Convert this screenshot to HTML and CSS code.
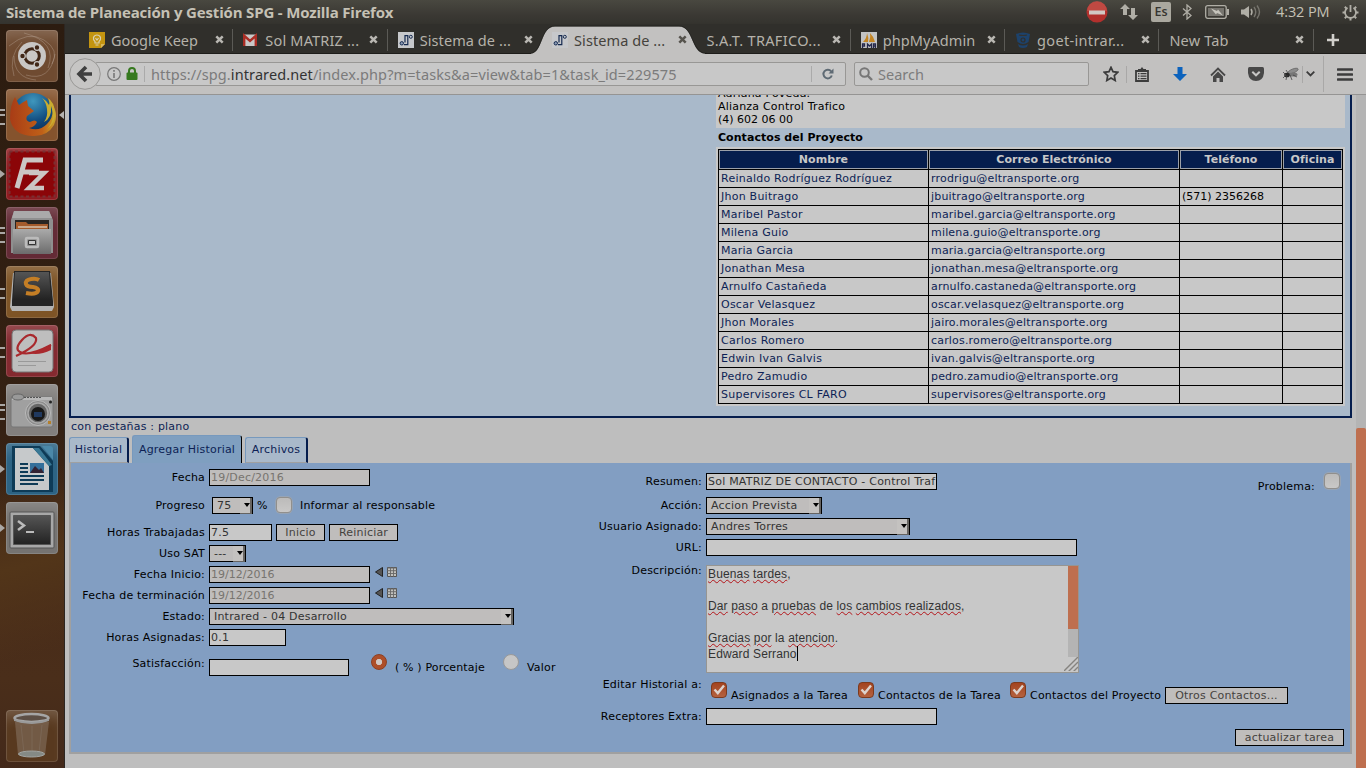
FILE: index.html
```html
<!DOCTYPE html>
<html lang="es">
<head>
<meta charset="utf-8">
<title>Sistema de Planeación y Gestión SPG</title>
<link rel="stylesheet" href="styles.css">
</head>
<body>
<svg width="0" height="0" class="defs">
  <defs>
    <linearGradient id="metal" x1="0" y1="0" x2="0" y2="1"><stop offset="0" stop-color="#aaa"/><stop offset="1" stop-color="#6c6c6c"/></linearGradient>
    <linearGradient id="dark" x1="0" y1="0" x2="0" y2="1"><stop offset="0" stop-color="#555"/><stop offset="1" stop-color="#222"/></linearGradient>
    <radialGradient id="globe" cx=".5" cy=".2" r=".8"><stop offset="0" stop-color="#3f97bd"/><stop offset=".6" stop-color="#124d80"/><stop offset="1" stop-color="#0c2c55"/></radialGradient>
    <linearGradient id="fox" x1="0" y1="0" x2="1" y2="0"><stop offset="0" stop-color="#a83c16"/><stop offset=".7" stop-color="#c06018"/><stop offset="1" stop-color="#c9a52c"/></linearGradient>
    <symbol id="close" viewBox="0 0 9 9"><path d="M1.3 1.3l6.4 6.4M7.7 1.3L1.3 7.7" stroke="currentColor" stroke-width="2.5"/></symbol>
    <symbol id="spg" viewBox="0 0 16 16"><path fill="#c6c8cb" d="M0 0h16v16H0z"/><path d="M7 10.500V3.600h2.800v9H6" fill="none" stroke="#152a50" stroke-width="1.200"/><circle cx="3.800" cy="11.300" r="1.700" fill="#8b9bb5" stroke="#152a50"/><circle cx="12.800" cy="4.800" r="1.500" fill="none" stroke="#152a50"/></symbol>
    <symbol id="cal" viewBox="0 0 10 10"><path fill="#c0c0bc" stroke="#555" d="M.5.5h9v9h-9z"/><path fill="none" stroke="#666" stroke-width=".9" d="M0 1h10M0 3.7h10M0 6.5h10M3.5 0v10M6.5 0v10"/></symbol>
    <symbol id="back" viewBox="0 0 8 10"><path d="M7.5.5v9L.5 5z" fill="#555" stroke="#222"/></symbol>
    <symbol id="check" viewBox="0 0 16 16"><path d="M3.5 7.5l3.3 3.6L13 3.5" fill="none" stroke="#ddd3cd" stroke-width="2.4"/></symbol>
  </defs>
</svg>

<header class="panel">
  <h1>Sistema de Planeación y Gestión SPG - Mozilla Firefox</h1>
  <div class="tray">
    <svg class="t-stop" width="22" height="22" viewBox="0 0 22 22"><circle cx="11" cy="11" r="10.5" fill="#b2302d"/><path d="M1 10a10 10 0 0 1 20 0z" fill="#c85a50" opacity=".6"/><path fill="#d2c8c4" d="M3 9.5h16v4H3z"/></svg>
    <svg class="t-net" width="18" height="16" viewBox="0 0 18 16"><path fill="#b0aea6" d="M5 0l5 5H7v6H3V5H0zM13 16l5-5h-3V4h-4v7H8z"/></svg>
    <span class="t-lang">Es</span>
    <svg class="t-bt" width="10" height="16" viewBox="0 0 10 16"><path d="M1 4.5l8 7L5 15V1l4 3.5-8 7" fill="none" stroke="#b0aea6" stroke-width="1.3"/></svg>
    <svg class="t-bat" width="24" height="14" viewBox="0 0 24 14"><rect x=".7" y=".7" width="20.5" height="12.6" rx="2" fill="none" stroke="#b0aea6" stroke-width="1.3"/><path fill="#77756f" d="M3 3h16v8H3z"/><path fill="#b0aea6" d="M22 4h2v6h-2z"/><path fill="#c6c4bc" d="M6 3.500l6 2.500 1-1.500 5 6-6-2.500-1 1.500z"/></svg>
    <svg class="t-vol" width="20" height="14" viewBox="0 0 20 14"><path fill="#b0aea6" d="M0 4.500h3L8 1v12L3 9.500H0z"/><path d="M10 4q2 3 0 6" fill="none" stroke="#b0aea6" stroke-width="1.500"/><path d="M13 2q3.500 5 0 10M16 .5q5 6.500 0 13" fill="none" stroke="#77756e" stroke-width="1.400"/></svg>
    <span class="t-clock">4:32 PM</span>
    <svg class="t-gear" width="17" height="17" viewBox="0 0 17 17"><path d="M5.500 3.800a5.500 5.500 0 1 0 6 0M8.500 1v7" fill="none" stroke="#b0aea6" stroke-width="1.800"/><path d="M.5 8.500h2.500M14 8.500h2.500M8.500 14v2.500M2.800 2.800l1.800 1.800M14.200 2.800l-1.800 1.800M2.800 14.200l1.800-1.800M14.200 14.200l-1.800-1.800" stroke="#b0aea6" stroke-width="2"/></svg>
  </div>
</header>

<div class="desk">
<aside class="launcher">
  <div class="app dash"><svg viewBox="0 0 52 52"><g fill="none" stroke="#b9a595" stroke-width="1" opacity=".4"><path d="M3 16Q22 0 38 10T46 34M8 46Q2 26 16 12M18 3Q52 12 42 38M49 24Q44 52 20 45M8 26Q8 48 30 50"/></g><circle cx="26" cy="26" r="14" fill="#c9c7c5"/><circle cx="26" cy="26" r="7.300" fill="none" stroke="#402616" stroke-width="3"/><g fill="#402616" stroke="#c9c7c5" stroke-width="1.200"><circle cx="16.500" cy="26" r="2.800"/><circle cx="31" cy="17.500" r="2.800"/><circle cx="31" cy="34.500" r="2.800"/></g></svg></div>
  <div class="app firefox m3 focused"><svg viewBox="0 0 52 52"><circle cx="27" cy="24.500" r="20.500" fill="url(#globe)"/><path d="M9 8l4 8q4-3 8-5l1 6 6 5-7 5q-2 5 3 6 5-3 7 0-2 5-8 6 10 4 18-4 8-8 5-20 7 10 2 21-7 12-22 11Q7 46 4 30q0-14 5-22z" fill="url(#fox)"/><path d="M36 9q4 4 5 11 1 8-3 13 8-4 7-16 5 14-4 23 9-6 8-17-1-10-7-14 2 5 1 7-3-5-7-7z" fill="#c9ad30"/></svg></div>
  <div class="app filezilla m1"><svg viewBox="0 0 52 52"><rect x="3.500" y="3.500" width="45" height="45" fill="#8b0508" stroke="#7a3032" stroke-width="2" stroke-dasharray="3 2.500"/><path fill="none" stroke="#cbc6c4" stroke-width="5" d="M11 40l8-28h18M16 24h17"/><path fill="none" stroke="#cbc6c4" stroke-width="4.500" d="M23 25h15L23 40h15"/></svg></div>
  <div class="app files m3"><svg viewBox="0 0 52 52"><path d="M8 4h35l4 9v33H5V13z" fill="#8f8f8f"/><path d="M8 4h35l3 7H6z" fill="#aaa"/><path fill="#292522" d="M9 13h34v12H9z"/><path fill="#a55b2c" d="M10 15h10l2 2h20v8H10z"/><path fill="#c9a78b" d="M12 19h29v2H12z"/><path fill="url(#metal)" d="M7 22h38v25H7z"/><rect x="20" y="31" width="12" height="9" rx="1" fill="none" stroke="#bbb" stroke-width="2.500"/><path fill="#c8c8c8" stroke="#333" d="M22.500 33.500h7v4h-7z"/></svg></div>
  <div class="app sublime m2"><svg viewBox="0 0 52 52"><path fill="#b3b3b3" d="M7 7h38l3 34-2 4H6l-2-4z"/><path fill="#252525" d="M8 5h36l3 30v5H6v-5z"/><path fill="url(#dark)" d="M9 6h34l2 28H7z"/><path d="M33 14q-3-2-8-1-6 1-5 5 1 3 7 3 6 1 5 4-2 4-12 2" fill="none" stroke="#c47e25" stroke-width="4"/></svg></div>
  <div class="app reader m2"><svg viewBox="0 0 52 52"><rect x="6" y="5" width="41" height="42" rx="4" fill="#bebebe" stroke="#777"/><path d="M10 31Q32 21 30 13 24 6 16 15t-2 12q8 5 31-7" fill="none" stroke="#a9292d" stroke-width="2.200"/><path d="M22 28q12 0 23-9v6q-12 6-23 3z" fill="#a9292d"/><path stroke="#999" d="M12 36.500h28M12 40.500h18"/></svg></div>
  <div class="app camera m3"><svg viewBox="0 0 52 52"><rect x="5" y="13" width="42" height="30" rx="2" fill="#a0a0a0" stroke="#777"/><path d="M6 13h40v3H6z" fill="#b8b8b8"/><ellipse cx="12" cy="13" rx="6" ry="3" fill="#999" stroke="#666"/><path stroke="#555" stroke-dasharray="2 1" d="M18 13.500h17"/><circle cx="32" cy="29" r="12.500" fill="#8a8a8a" stroke="#bbb"/><circle cx="32" cy="29" r="10" fill="#666" stroke="#aaa" stroke-width="1.500"/><circle cx="32" cy="30" r="7" fill="#181818"/><path fill="#20395f" d="M28 28h8v5h-8z"/><circle cx="44.500" cy="18" r="1.500" fill="#222"/><path fill="#b5802b" d="M42 37h3v3h-3z"/></svg></div>
  <div class="app writer m1"><svg viewBox="0 0 52 52"><path d="M6 3h28l13 15v31H6z" fill="#0e3b57"/><path d="M36 3h8q3 0 3 3v11z" fill="#4b88a8"/><path d="M9 5h18l16 18v24H9z" fill="#c6c9cb"/><path d="M27 5h6l13 17-3 1z" fill="#397895"/><path d="M14 21h8M14 25h8M14 29h8M14 33h24M14 37h24M14 41h18" stroke="#0e3b57" stroke-width="1.800"/><path fill="#346f9b" d="M24 20h14v10H24z"/><path fill="#323" d="M24 30l5-7 4 4 2-2 3 5z"/></svg></div>
  <div class="app terminal m1"><svg viewBox="0 0 52 52"><rect x="4" y="10" width="44" height="36" rx="1" fill="#a8a8a8" stroke="#555"/><path fill="url(#dark)" stroke="#555" d="M7.500 13.500h37v29h-37z"/><path d="M12 19l6 4.500-6 4.500" fill="none" stroke="#bbb" stroke-width="2.500"/><path d="M20 30h8" stroke="#bbb" stroke-width="2"/></svg></div>
  <div class="app trash"><svg viewBox="0 0 52 52"><path d="M9 12h34l-4 33q-13 4-27 0z" fill="#9a8c80" opacity=".4"/><path d="M15 15l3 28M26 16v28M36 15l-3 28" stroke="#aaa" opacity=".15"/><ellipse cx="25.500" cy="8" rx="17" ry="4" fill="#5d4f45" stroke="#a5a5a5" stroke-width="2.500"/><path d="M8 9q17 6 35 0v2q-17 6-35 0z" fill="#999"/><ellipse cx="25.500" cy="44" rx="13" ry="3" fill="#858a85" stroke="#a2a5a2"/></svg></div>
</aside>

<main class="window">
  <nav class="tabs">
    <div class="tab"><svg class="fav" viewBox="0 0 16 16"><path fill="#c39410" d="M0 0h16v12l-4 4H0z"/><path fill="#d8b65a" d="M12 16v-4h4z"/><path d="M6 9.500Q4 8 4.500 5.500 5.500 3 8 3t3.500 2.500Q12 8 10 9.500V11H6zM6.500 13h3M6.500 6l1.500 2 1.500-2" fill="none" stroke="#d9d0b0" stroke-width="1.200"/></svg><span>Google Keep</span><svg class="x"><use href="#close"/></svg></div>
    <div class="tab"><svg class="fav" viewBox="0 0 16 16"><path fill="#c8c8c8" d="M0 2.500h14v11.500H0z"/><path d="M1.200 14V3.800L7 9l5.800-5.200V14" fill="none" stroke="#aa2d25" stroke-width="2.400"/></svg><span class="wider">Sol MATRIZ ...</span><svg class="x"><use href="#close"/></svg></div>
    <div class="tab last"><svg class="fav"><use href="#spg"/></svg><span class="wide">Sistema de ...</span><svg class="x"><use href="#close"/></svg></div>
    <div class="tab active"><svg class="shape" width="178" height="30" viewBox="0 0 178 30"><path d="M0 29.500C12 29.500 9 2.500 24 2.500H148C163 2.500 160 29.500 174 29.500V30H0z" fill="#c2c1c0"/><path d="M-2 29.500C12 29.500 9 2 24 2H148C163 2 160 29.500 176 29.500" fill="none" stroke="#1d1c19" opacity=".6"/></svg><svg class="fav"><use href="#spg"/></svg><span class="wide">Sistema de ...</span><svg class="x"><use href="#close"/></svg></div>
    <div class="tab"><span class="widest">S.A.T. TRAFICO...</span><svg class="x"><use href="#close"/></svg></div>
    <div class="tab"><svg class="fav" viewBox="0 0 16 16"><path fill="#c3c4c4" d="M0 0h16v16H0z"/><path fill="#c48522" d="M2 10Q6 6 6 1q2 5 1 9zM8 10q2-5 1-9 4 4 5 9z"/><path d="M1.500 16v-4h2v2h-2M6.500 16v-4l2 2 2-2v4M12.500 16v-4h2v4M12.500 14h2" stroke="#25284b" stroke-width="1.300" fill="none"/></svg><span class="wide">phpMyAdmin</span><svg class="x"><use href="#close"/></svg></div>
    <div class="tab"><svg class="fav" viewBox="0 0 16 16"><path fill="#1d426b" d="M1 2q7-3 14 0l-1.500 8q-5.500 4-11 0zM3 12q5 3 10 0l-1 3q-4 2-8 0z"/><path d="M4 3q4 1 8 0" stroke="#34322f" stroke-width="1.200" fill="none"/><circle cx="8" cy="8" r="2" fill="none" stroke="#302f2b" stroke-width="1.200"/></svg><span class="widest">goet-intrar...</span><svg class="x"><use href="#close"/></svg></div>
    <div class="tab"><span class="wider">New Tab</span><svg class="x"><use href="#close"/></svg></div>
    <svg class="plus" width="12" height="12" viewBox="0 0 12 12"><path d="M6 0v12M0 6h12" stroke="#d2d0cc" stroke-width="2.600"/></svg>
  </nav>

  <div class="toolbar">
    <svg class="goback" width="32" height="32" viewBox="0 0 32 32"><circle cx="16" cy="16" r="15.300" fill="#c6c5c4" stroke="#999896"/><path d="M23 16H11M17 9l-7 7 7 7" fill="none" stroke="#3f3f3f" stroke-width="3.600"/></svg>
    <div class="urlbar">
      <svg width="14" height="14" viewBox="0 0 14 14"><circle cx="7" cy="7" r="6.300" fill="none" stroke="#777" stroke-width="1.200"/><path d="M7 6v5M7 3v1.700" stroke="#777" stroke-width="1.600"/></svg>
      <svg class="lock" width="12" height="14" viewBox="0 0 12 14"><path d="M3 6V4a3 3 0 0 1 6 0v2" fill="none" stroke="#36791f" stroke-width="2"/><rect x=".5" y="5.500" width="11" height="7.500" rx="1" fill="#36791f"/></svg>
      <i class="vsep"></i>
      <span class="url">https://spg.<b>intrared.net</b>/index.php?m=tasks&amp;a=view&amp;tab=1&amp;task_id=229575</span>
      <i class="vsep rl"></i>
      <svg class="reload" width="12" height="12" viewBox="0 0 12 12"><path d="M9.800 7.500a4.300 4.300 0 1 1-.6-4" fill="none" stroke="#5e6a74" stroke-width="2"/><path d="M11.500.5v5h-5z" fill="#5e6a74"/></svg>
    </div>
    <div class="search"><svg width="14" height="14" viewBox="0 0 14 14"><circle cx="5.500" cy="5.500" r="4.300" fill="none" stroke="#777" stroke-width="2"/><path d="M8.500 8.500L13 13" stroke="#777" stroke-width="2.400"/></svg><span>Search</span></div>
    <div class="tools">
      <svg width="16" height="16" viewBox="0 0 16 16"><path d="M8 1.300l2 4.400 4.800.6-3.500 3.300.9 4.900L8 12l-4.200 2.500.9-4.900L1.200 6.300 6 5.700z" fill="none" stroke="#3c3c3c" stroke-width="1.700"/></svg>
      <i class="s1"></i>
      <svg class="clip" width="14" height="15" viewBox="0 0 14 15"><path d="M1 4h12v10H1z" fill="#c2c1c0" stroke="#3c3c3c" stroke-width="1.800"/><path fill="#3c3c3c" d="M3 4V2h2.500L7 0l1.500 2H11v2z"/><path stroke="#3c3c3c" stroke-width="1.300" d="M3 6.700h1.500M5.500 6.700h6M3 9.200h1.500M5.500 9.200h6M3 11.700h1.500M5.500 11.700h6"/></svg>
      <svg class="down" width="14" height="14" viewBox="0 0 14 14"><path fill="#0c63bd" d="M4.500 0h5v7H14l-7 7-7-7h4.500z"/></svg>
      <svg class="home" width="16" height="15" viewBox="0 0 16 15"><path d="M1 8.500L8 1.600l7 6.900" fill="none" stroke="#484848" stroke-width="1.800"/><path fill="#484848" d="M8 4.500l5 5V15H9.500v-4h-3v4H3V9.500z"/></svg>
      <svg class="pocket" width="16" height="14" viewBox="0 0 16 14"><path fill="#484848" d="M1.500 0h13Q16 0 16 1.500V6q-1 8-8 8T0 6V1.500Q0 0 1.500 0z"/><path d="M4.300 4.800L8 8.300l3.700-3.500" fill="none" stroke="#c7c6c5" stroke-width="2"/></svg>
      <svg class="fly" width="17" height="14" viewBox="0 0 17 14"><ellipse cx="11" cy="4" rx="5.500" ry="2" transform="rotate(-22 11 4)" fill="#8c8c8c" stroke="#555" stroke-width=".6"/><ellipse cx="11" cy="7.500" rx="4.500" ry="2" fill="#777"/><ellipse cx="5" cy="8" rx="2.800" ry="2.300" fill="#272727"/><path d="M1 5l3 3-3 3M5 8l-1 5M8 8l2 5M11 8l4 2M6 6L4 3" stroke="#444" stroke-width=".8" fill="none"/></svg>
      <i class="s2"></i>
      <svg class="chev" width="9" height="6" viewBox="0 0 9 6"><path d="M.7.700l3.800 3.800L8.300.700" fill="none" stroke="#3c3c3c" stroke-width="1.800"/></svg>
      <i class="s3"></i>
      <svg class="menu" width="16" height="13" viewBox="0 0 16 13"><path d="M1 1.500h14M1 6.500h14M1 11.500h14" stroke="#3c3c3c" stroke-width="2.600" stroke-linecap="round"/></svg>
    </div>
  </div>

  <div class="view">
    <div class="page">
      <section class="task">
        <div class="details">
          <div class="people"><p>Adriana Poveda.<br>Alianza Control Trafico<br><span class="num">(4) 602 06 00</span></p></div>
          <h2>Contactos del Proyecto</h2>
          <div class="tablebox">
          <table>
            <colgroup><col class="c1"><col class="c2"><col class="c3"><col class="c4"></colgroup>
            <tr><th>Nombre</th><th>Correo Electrónico</th><th>Teléfono</th><th>Oficina</th></tr>
            <tr><td>Reinaldo Rodríguez Rodríguez</td><td>rrodrigu@eltransporte.org</td><td></td><td></td></tr>
            <tr><td>Jhon Buitrago</td><td>jbuitrago@eltransporte.org</td><td class="tel">(571) 2356268</td><td></td></tr>
            <tr><td>Maribel Pastor</td><td>maribel.garcia@eltransporte.org</td><td></td><td></td></tr>
            <tr><td>Milena Guio</td><td>milena.guio@eltransporte.org</td><td></td><td></td></tr>
            <tr><td>Maria Garcia</td><td>maria.garcia@eltransporte.org</td><td></td><td></td></tr>
            <tr><td>Jonathan Mesa</td><td>jonathan.mesa@eltransporte.org</td><td></td><td></td></tr>
            <tr><td>Arnulfo Castañeda</td><td>arnulfo.castaneda@eltransporte.org</td><td></td><td></td></tr>
            <tr><td>Oscar Velasquez</td><td>oscar.velasquez@eltransporte.org</td><td></td><td></td></tr>
            <tr><td>Jhon Morales</td><td>jairo.morales@eltransporte.org</td><td></td><td></td></tr>
            <tr><td>Carlos Romero</td><td>carlos.romero@eltransporte.org</td><td></td><td></td></tr>
            <tr><td>Edwin Ivan Galvis</td><td>ivan.galvis@eltransporte.org</td><td></td><td></td></tr>
            <tr><td>Pedro Zamudio</td><td>pedro.zamudio@eltransporte.org</td><td></td><td></td></tr>
            <tr><td>Supervisores CL FARO</td><td>supervisores@eltransporte.org</td><td></td><td></td></tr>
          </table>
          </div>
        </div>
      </section>
      <p class="mode">con pestañas : plano</p>
      <div class="ptabs"><a>Historial</a><a class="on">Agregar Historial</a><a>Archivos</a></div>
      <form class="log">
        <div class="left">
          <div class="row r-fecha"><label>Fecha</label><span class="in off w161">19/Dec/2016</span></div>
          <div class="row r-prog"><label>Progreso</label><span class="sel w41">75</span><span class="pct">%</span><span class="cb"></span><span class="inform">Informar al responsable</span></div>
          <div class="row r-horas"><label>Horas Trabajadas</label><span class="in w63">7.5</span><span class="btn b-ini">Inicio</span><span class="btn b-rei">Reiniciar</span></div>
          <div class="row r4"><label>Uso SAT</label><span class="sel w37">---</span></div>
          <div class="row r4"><label>Fecha Inicio:</label><span class="in off num w161">19/12/2016</span><svg class="bk"><use href="#back"/></svg><svg class="cal"><use href="#cal"/></svg></div>
          <div class="row r4"><label>Fecha de terminación</label><span class="in off num w161">19/12/2016</span><svg class="bk"><use href="#back"/></svg><svg class="cal"><use href="#cal"/></svg></div>
          <div class="row r4"><label>Estado:</label><span class="sel w305">Intrared - 04 Desarrollo</span></div>
          <div class="row r4"><label>Horas Asignadas:</label><span class="in w77">0.1</span></div>
          <div class="row r-sat"><label>Satisfacción:</label><span class="in w140"></span><span class="radio on"></span><span class="rt rt1">( % ) Porcentaje</span><span class="radio ra2"></span><span class="rt">Valor</span></div>
        </div>
        <div class="right">
          <div class="row r-res"><label>Resumen:</label><span class="in w231 sum">Sol MATRIZ DE CONTACTO - Control Traf</span></div>
          <div class="row r-acc"><label>Acción:</label><span class="sel w116">Accion Prevista</span></div>
          <div class="row r4"><label>Usuario Asignado:</label><span class="sel w204">Andres Torres</span></div>
          <div class="row r4"><label>URL:</label><span class="in w371"></span></div>
          <div class="row r-desc"><label>Descripción:</label>
            <div class="area">
              <div class="txt"><u>Buenas</u> <u>tardes</u>,<br><br><u>Dar</u> <u>paso</u> a <u>pruebas</u> de <u>los</u> <u>cambios</u> <u>realizados</u>,<br><br><u>Gracias</u> <u>por</u> la <u>atencion</u>.<br>Edward Serrano<i class="caret"></i></div>
              <div class="sb"><i class="thumb"></i><i class="track"></i><svg width="14" height="14" viewBox="0 0 14 14"><path d="M-1 15L14 0M4 15L14 5M9 15l5-5" stroke="#85837f" stroke-width="1.400"/></svg></div>
            </div>
          </div>
          <div class="row r-ed"><label>Editar Historial a:</label>
            <span class="cb ck k1"><svg><use href="#check"/></svg></span><span class="ct ct1">Asignados a la Tarea</span>
            <span class="cb ck k2"><svg><use href="#check"/></svg></span><span class="ct ct2">Contactos de la Tarea</span>
            <span class="cb ck k3"><svg><use href="#check"/></svg></span><span class="ct ct3">Contactos del Proyecto</span>
            <span class="btn b-otros">Otros Contactos...</span></div>
          <div class="row r4"><label>Receptores Extra:</label><span class="in w231"></span></div>
        </div>
        <div class="side">
          <div class="prob"><span>Problema:</span><span class="cb"></span></div>
          <span class="btn b-act">actualizar tarea</span>
        </div>
      </form>
    </div>
    <div class="scroll"><i></i></div>
  </div>
</main>
</div>
</body>
</html>
```

FILE: styles.css
```css
* { box-sizing: border-box; }
body { margin: 0; width: 1366px; height: 768px; overflow: hidden; background: #3a2414; font: 11px/13px "DejaVu Sans", sans-serif; color: #000; }
p, h1, h2 { margin: 0; font-size: inherit; }
svg { display: block; flex: none; }
i { display: block; flex: none; }
.defs { position: absolute; }

/* desktop panel */
.panel { height: 24px; display: flex; justify-content: space-between; align-items: center; padding-left: 6px; background: linear-gradient(#494840, #3b3934 60%, #34332e); color: #c5c1b5; font-family: "Open Sans", "Noto Sans", sans-serif; }
.panel h1 { font-size: 15px; font-weight: 700; line-height: 24px; white-space: nowrap; letter-spacing: -.17px; }
.tray { display: flex; align-items: center; height: 24px; width: 280px; }
.t-net { margin-left: 12px; }
.t-lang { margin-left: 13px; width: 20px; height: 20px; border-radius: 2px; background: #aaa89f; color: #36342f; font: 600 12.500px/20px "Open Sans", sans-serif; text-align: center; }
.t-bt { margin-left: 11px; }
.t-bat { margin-left: 13px; }
.t-vol { margin-left: 12px; }
.t-clock { margin-left: 15px; width: 54px; font-size: 14.500px; line-height: 22px; letter-spacing: -.1px; white-space: nowrap; }
.t-gear { margin-left: 12px; }

.desk { display: flex; height: 744px; }

/* launcher */
.launcher { width: 65px; padding: 6px 0 6px 6px; display: flex; flex-direction: column; gap: 7px; background: linear-gradient(165deg, #4a2d1a00 60%, #523519 72%, #40261500 84%), linear-gradient(#2c1c10, #352113 55%, #482b19 75%, #4a2e1a 88%, #43291a); border-right: 1px solid #2c2622; }
.app { position: relative; width: 52px; height: 52px; border-radius: 4px; box-shadow: inset 0 0 0 1px #ffffff20, inset 0 14px 14px -8px #ffffff30; flex: none; }
.app svg { width: 52px; height: 52px; }
.dash { background: #6f4b31; }
.firefox { background: #85532d; }
.filezilla { background: #8f1b20; }
.files { background: #632a35; }
.sublime { background: #7e5426; }
.reader { background: #84292f; }
.camera { background: #827f7d; }
.writer { background: #2c6384; }
.terminal { background: #757371; }
.trash { background: #58391f; margin-top: auto; }
.m1::before { content: ""; position: absolute; left: -6px; top: 22px; border: 4px solid transparent; border-left: 5px solid #aaa7a4; border-right: 0; }
.m2::before, .m3::before { content: ""; position: absolute; left: -6px; top: 22px; width: 5px; height: 7px; border: solid #aaa7a4; border-width: 2px 0; }
.m3::before { top: 20px; height: 12px; background: linear-gradient(#aaa7a4, #aaa7a4) 0 3px / 5px 2px no-repeat; }
.focused::after { content: ""; position: absolute; right: -6px; top: 22px; border: 4px solid transparent; border-right: 5px solid #b5b2af; border-left: 0; }

/* browser tabs */
.window { width: 1301px; letter-spacing: .2px; }
.tabs { height: 30px; display: flex; padding-left: 14px; background: #302f2b; border-bottom: 1px solid #1e1d1a; font: 14.500px/20px "Noto Sans", "Open Sans", sans-serif; letter-spacing: 0; color: #b5b2aa; }
.tab { position: relative; width: 154.350px; height: 30px; padding: 1px 9.500px 0 10px; display: flex; align-items: center; flex: none; white-space: nowrap; }
.tab::after { content: ""; position: absolute; right: 0; top: 5px; width: 1px; height: 22px; background: #5b5a56; }
.tab.last::after, .tab.active::after { display: none; }
.tab span { flex: 1; position: relative; }
.wide { letter-spacing: .08px; }
.wider { letter-spacing: .18px; }
.widest { letter-spacing: .33px; }
.fav { width: 16px; height: 16px; margin-right: 6px; position: relative; }
.tab .x { position: relative; width: 9px; height: 9px; color: #b9b7b2; }
.tab.active { color: #45423c; }
.tab.active .x { color: #56534d; }
.shape { position: absolute; left: -11px; top: 0; }
.plus { margin: 10px 0 0 13px; }

/* toolbar */
.toolbar { height: 41px; display: flex; align-items: center; padding-left: 4px; background: #c2c1c0; border-bottom: 1px solid #959493; font: 14.500px/20px "Noto Sans", "Open Sans", sans-serif; letter-spacing: 0; }
.goback { position: relative; z-index: 1; }
.urlbar { margin-left: -6px; width: 751px; height: 24px; border: 1px solid #989795; border-radius: 2px; background: #c8c8c8; display: flex; align-items: center; padding-left: 11px; }
.lock { margin-left: 5px; }
.vsep { width: 1px; height: 16px; background: #aaa; margin: 0 6px 0 6px; }
.url { width: 655px; color: #7b7b7b; white-space: nowrap; letter-spacing: .1px; }
.url b { font-weight: 400; color: #333; }
.rl { margin-left: auto; margin-right: 10px; }
.reload { margin-right: 11px; }
.search { margin-left: 8px; width: 235px; height: 24px; border: 1px solid #989795; border-radius: 2px; background: #c8c8c8; display: flex; align-items: center; padding-left: 4px; gap: 5px; color: #7c7c7c; }
.tools { display: flex; align-items: center; padding-left: 14px; }
.tools i { width: 1px; height: 17px; background: #a9a8a7; }
.s1 { margin-left: 7px; }
.clip { margin-left: 8px; }
.down { margin-left: 24px; }
.home { margin-left: 23px; }
.pocket { margin-left: 22px; }
.fly { margin-left: 18px; }
.s2 { margin-left: 3px; }
.chev { margin-left: 3px; }
.tools .s3 { margin-left: 8px; height: 36px; }
.menu { margin-left: 13px; }

/* page */
.view { display: flex; height: 673px; background: #bebebe; overflow: hidden; }
.page { width: 1291px; padding: 0 4px; }
.scroll { width: 10px; background: #b4b4b4; }
.scroll i { margin-top: 333px; height: 345px; background: #be6f4f; border-radius: 2px 2px 0 0; }
.task { height: 323px; width: 1283px; border: 2px solid #051d4d; border-top: 0; background: #a9b9ca; display: flex; justify-content: flex-end; padding-right: 5px; }
.details { width: 629px; }
.people { height: 33px; background: #c8c8c8; overflow: hidden; padding-left: 2px; }
.people p { margin-top: -8px; }
h2 { height: 19px; padding-left: 2px; font-weight: 700; line-height: 20px; letter-spacing: .05px; }
.tablebox { height: 259px; padding: 2px; background: #c8c8c8; }
table { width: 624px; table-layout: fixed; border-collapse: collapse; }
.c1 { width: 210px; } .c2 { width: 251px; } .c3 { width: 103px; } .c4 { width: 60px; }
th { height: 20px; padding: 0; border: 1px solid #000; background: #051d4d; color: #c8c8c8; box-shadow: inset 0 0 0 1px #9a9fa8; line-height: 17px; letter-spacing: .05px; }
td { height: 18px; padding: 0 2px; border: 1px solid #000; color: #0d1f55; line-height: 15px; white-space: nowrap; letter-spacing: .24px; }
td:nth-child(2) { letter-spacing: .18px; }
td.tel { color: #000; letter-spacing: 0; }
.num { letter-spacing: 0; }
.mode { height: 17px; padding: 2px 0 0 2px; color: #0d1f55; line-height: 14px; }

.ptabs { height: 28px; display: flex; align-items: flex-end; gap: 3px; }
.ptabs a { height: 26px; width: 60px; text-align: center; background: #a9b9ca; color: #0d1f55; line-height: 24px; border: 1px solid #7799bd; border-right: 2px solid #051d4d; border-bottom: 1px solid #a0a0a0; border-radius: 3px 3px 0 0; white-space: nowrap; }
.ptabs a.on { width: 110px; height: 28px; background: #7f9fc0; border-right: 1px solid #000; border-bottom: 0; line-height: 27px; }
.ptabs a:last-child { width: 63px; }

/* log form */
.log { position: relative; height: 291px; width: 1283px; border: 2px solid #a0a0a0; border-top: 0; background: #829ec2; display: flex; }
.left { width: 517px; }
.right { width: 632px; }
.side { flex: 1; display: flex; flex-direction: column; align-items: flex-end; }
.row { display: flex; height: 17px; line-height: 17px; white-space: nowrap; }
.left label { width: 134px; margin-right: 4px; text-align: right; flex: none; }
.right label { width: 114px; margin-right: 4px; text-align: right; flex: none; }
.in { height: 17px; border: 1px solid #000; background: #c8c8c8; padding-left: 1px; line-height: 15px; color: #333; overflow: hidden; flex: none; }
.in.off { background: #bfbdbc; color: #77746f; }
.in.sum { letter-spacing: .22px; }
.sel { position: relative; height: 17px; border: 1px solid #000; background: #bfbdbc; padding-left: 4px; line-height: 15px; color: #333; flex: none; }
.sel::before { content: ""; position: absolute; right: 0; top: 0; width: 10px; height: 15px; background: #c4c2c0; border: solid #666461; border-width: 0 2px 1px 0; }
.sel::after { content: ""; position: absolute; right: 2px; top: 5px; border: 3px solid transparent; border-top: 4px solid #000; border-bottom: 0; }
.btn { height: 17px; border: 1px solid #000; background: #bfbdbc; color: #45423e; line-height: 15px; text-align: center; flex: none; }
.cb { width: 16px; height: 16px; border: 1px solid #918f8c; border-radius: 4px; background: linear-gradient(#bcbbba, #c9c8c7); flex: none; box-shadow: 0 0 0 .5px #aaa; }
.ck { border-color: #7c3a1d; background: linear-gradient(#a3431e, #b5623f); box-shadow: none; }
.ck svg { width: 16px; height: 16px; margin: -1px; }
.w161 { width: 161px; } .w41 { width: 41px; } .w63 { width: 63px; } .w37 { width: 37px; } .w305 { width: 305px; } .w77 { width: 77px; } .w140 { width: 140px; } .w231 { width: 231px; } .w116 { width: 116px; } .w204 { width: 204px; } .w371 { width: 371px; }
.r-fecha { margin-top: 6px; }
.r-prog { margin-top: 11px; }
.r-prog .sel { margin-left: 3px; }
.pct { margin-left: 4px; width: 19px; }
.inform { margin-left: 8px; }
.r-horas { margin-top: 10px; }
.b-ini { width: 49px; margin-left: 4px; }
.b-rei { width: 69px; margin-left: 4px; }
.r4 { margin-top: 4px; }
.bk { width: 8px; height: 10px; margin: 1px 0 0 5px; }
.cal { width: 10px; height: 10px; margin: 1px 0 0 4px; }
.r-sat { margin-top: 8px; height: 24px; }
.r-sat label { line-height: 19px; }
.r-sat .in { margin-top: 5px; }
.radio { width: 16px; height: 16px; border-radius: 50%; border: 1px solid #999; background: #c6c6c6; margin-left: 22px; flex: none; }
.radio.on { border: 1px solid #8d3f20; background: radial-gradient(circle, #d0c8c4 0 2.800px, #ad4f2a 3.500px); }
.rt { margin: 5px 0 0 8px; }
.rt1 { width: 90px; letter-spacing: .15px; }
.radio.ra2 { margin-left: 18px; }
.r-res { margin-top: 10px; }
.r-acc { margin-top: 7px; }
.r-desc { margin-top: 9px; height: 108px; }
.r-desc label { line-height: 11px; }
.area { display: flex; width: 373px; height: 108px; border: 1px solid #969592; background: #c8c8c8; }
.txt { flex: 1; padding: 0 0 0 1px; font: 12px/16px "Liberation Sans", Arial, sans-serif; letter-spacing: .14px; color: #333; }
.txt u { text-decoration: underline wavy #b3151a 1px; text-underline-offset: 1px; }
.caret { display: inline-block; width: 1px; height: 15px; background: #000; vertical-align: -3px; }
.sb { width: 14px; margin-right: -4px; position: relative; left: -4px; }
.thumb { width: 10px; height: 63px; margin-left: 4px; background: #be6f4f; }
.track { width: 10px; height: 28px; margin-left: 4px; background: #b4b4b4; }
.r-ed { margin-top: 3px; height: 28px; }
.r-ed .cb { margin-top: 6px; }
.k1 { margin-left: 5px; } .k2 { margin-left: 9px; } .k3 { margin-left: 9px; }
.ct { margin: 11px 0 0 4px; flex: none; }
.ct1 { width: 118px; } .ct2 { width: 123px; } .ct3 { width: 131px; }
.b-otros { width: 123px; margin: 11px 0 0 4px; }
.prob { display: flex; padding: 10px 10px 0 0; gap: 9px; }
.prob span:first-child { margin-top: 7px; }
.b-act { width: 109px; margin: auto 6px 6px 0; }
```
